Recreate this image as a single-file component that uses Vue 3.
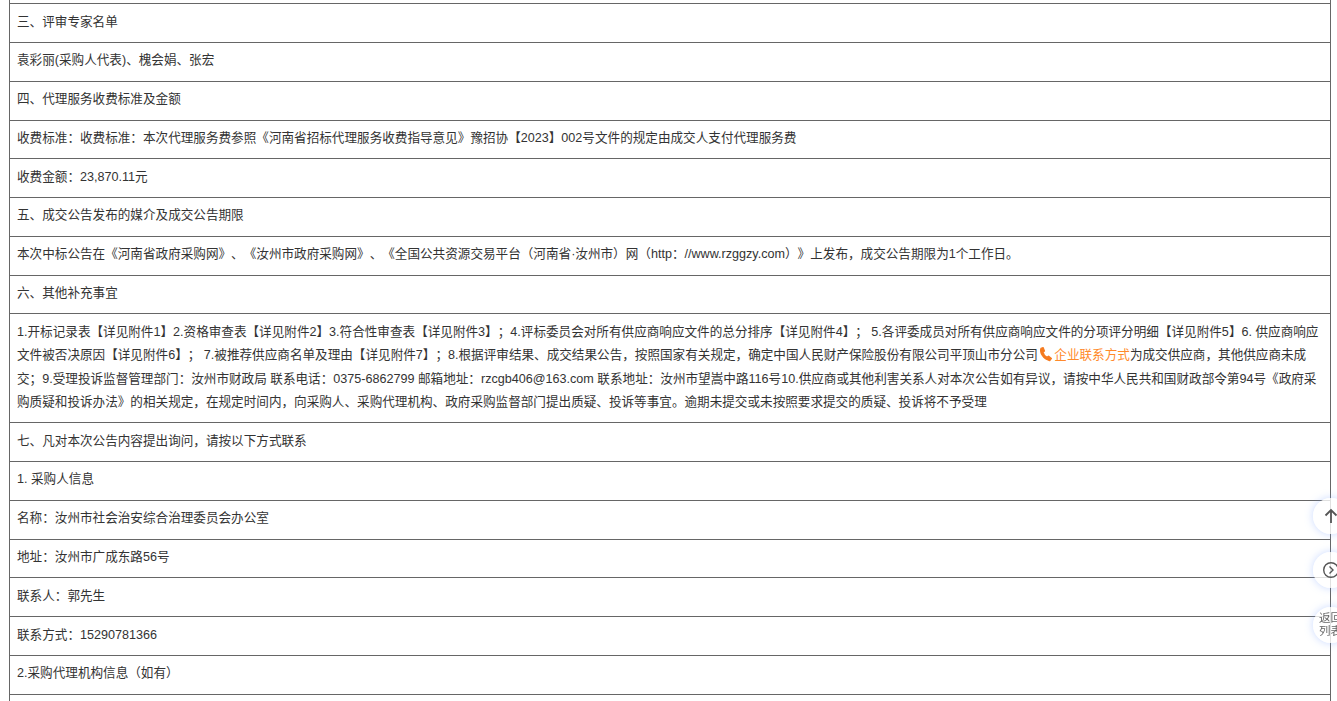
<script setup>
const rows = [
  '',
  '三、评审专家名单',
  '袁彩丽(采购人代表)、槐会娟、张宏',
  '四、代理服务收费标准及金额',
  '收费标准：收费标准：本次代理服务费参照《河南省招标代理服务收费指导意见》豫招协【2023】002号文件的规定由成交人支付代理服务费',
  '收费金额：23,870.11元',
  '五、成交公告发布的媒介及成交公告期限',
  '本次中标公告在《河南省政府采购网》、《汝州市政府采购网》、《全国公共资源交易平台（河南省·汝州市）网（http：//www.rzggzy.com）》上发布，成交公告期限为1个工作日。',
  '六、其他补充事宜',
  'LONG',
  '七、凡对本次公告内容提出询问，请按以下方式联系',
  '1. 采购人信息',
  '名称：汝州市社会治安综合治理委员会办公室',
  '地址：汝州市广成东路56号',
  '联系人：郭先生',
  '联系方式：15290781366',
  '2.采购代理机构信息（如有）',
  ''
]
</script>

<template>
  <div class="page">
    <table class="notice">
      <tbody>
        <tr v-for="(r, i) in rows" :key="i">
          <td v-if="r === 'LONG'">1.开标记录表【详见附件1】2.资格审查表【详见附件2】3.符合性审查表【详见附件3】；4.评标委员会对所有供应商响应文件的总分排序【详见附件4】； 5.各评委成员对所有供应商响应文件的分项评分明细【详见附件5】6. 供应商响应文件被否决原因【详见附件6】； 7.被推荐供应商名单及理由【详见附件7】；8.根据评审结果、成交结果公告，按照国家有关规定，确定中国人民财产保险股份有限公司平顶山市分公司<span class="contact"><svg class="phone" viewBox="0 0 16 16" width="15" height="17"><path d="M3.200 1.500C1.800 6 5.500 12.800 12.500 14.500l1.800-2.300-3-2.400-1.700 1.300C7.300 10 5.700 7.500 5.300 5.500l1.500-1.200L5.500.800Z" fill="#f57b20" stroke="#f57b20" stroke-width="1.500" stroke-linejoin="round"/></svg>企业联系方式</span>为成交供应商，其他供应商未成交；9.受理投诉监督管理部门：汝州市财政局 联系电话：0375-6862799 邮箱地址：rzcgb406@163.com 联系地址：汝州市望嵩中路116号10.供应商或其他利害关系人对本次公告如有异议，请按中华人民共和国财政部令第94号《政府采购质疑和投诉办法》的相关规定，在规定时间内，向采购人、采购代理机构、政府采购监督部门提出质疑、投诉等事宜。逾期未提交或未按照要求提交的质疑、投诉将不予受理</td>
          <td v-else>{{ r || '\u00a0' }}</td>
        </tr>
      </tbody>
    </table>
    <div class="float up">
      <svg viewBox="0 0 18 18" width="18" height="18"><path d="M9 16V3M3.500 8.500 9 3l5.500 5.500" fill="none" stroke="#555" stroke-width="1.800"/></svg>
    </div>
    <div class="float next">
      <svg viewBox="0 0 18 18" width="18" height="18"><circle cx="9" cy="9" r="7.300" fill="none" stroke="#555" stroke-width="1.400"/><path d="M7.500 5.500 11 9l-3.500 3.500" fill="none" stroke="#555" stroke-width="1.400"/></svg>
    </div>
    <div class="float back">返回<br>列表</div>
  </div>
</template>

<style scoped>
.page {
  height: 701px;
  overflow: hidden;
  padding: 0 6px 0 9px;
  box-sizing: border-box;
  position: relative;
  font-family: "Liberation Sans", "Noto Sans CJK SC", sans-serif;
}
.notice {
  width: 100%;
  margin-top: -35.5px;
  border-collapse: collapse;
  color: #333;
  font-size: 12.6px;
  line-height: 23.4px;
  text-spacing-trim: space-all;
}
.notice td {
  border: 1px solid #666;
  padding: 6.35px 7px 8.03px;
}
.contact { color: #ff8a2b; }
.phone { vertical-align: -4px; margin-right: 1.5px; }
.float {
  position: fixed;
  left: 1313px;
  width: 36px;
  height: 36px;
  border-radius: 50%;
  background: rgba(255, 255, 255, 0.8);
  box-shadow: 0 0 9px rgba(120, 160, 255, 0.4);
  display: flex;
  align-items: center;
  color: #666;
  box-sizing: border-box;
}
.up { top: 498px; padding-left: 9px; }
.next { top: 552px; padding-left: 9px; }
.back {
  top: 607px;
  padding-left: 6px;
  font-size: 11.500px;
  line-height: 13px;
}
</style>

<style>
html, body { overflow: hidden; margin: 0; }
</style>
